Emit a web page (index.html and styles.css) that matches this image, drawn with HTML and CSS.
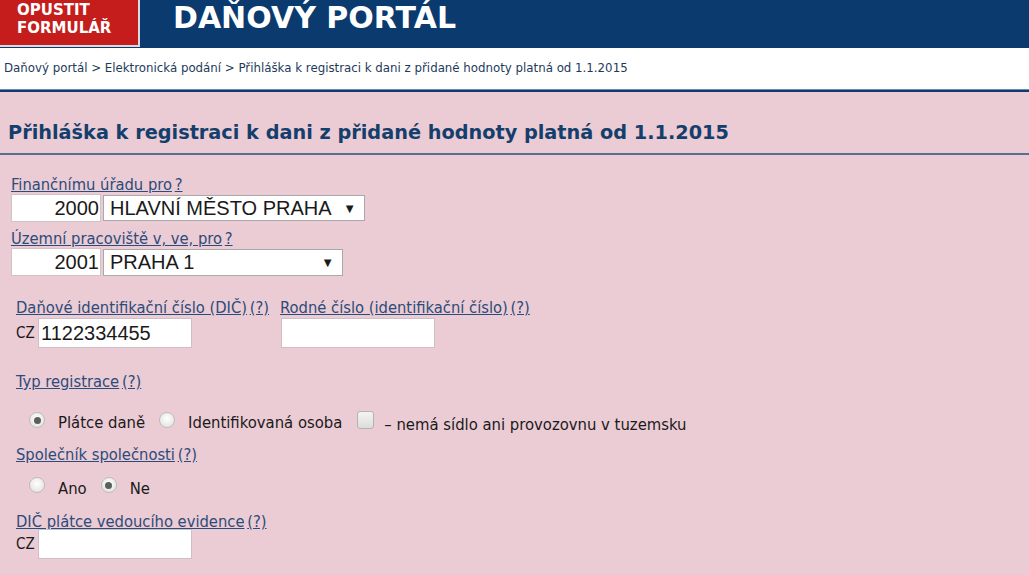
FILE: index.html
```html
<!DOCTYPE html>
<html lang="cs">
<head>
<meta charset="utf-8">
<title>Daňový portál</title>
<link rel="stylesheet" href="styles.css">
</head>
<body>
<header class="top">
  <a class="exit" href="#">OPUSTIT<br>FORMULÁŘ</a>
  <div class="portal">DAŇOVÝ PORTÁL</div>
</header>
<nav class="crumbs">Daňový portál &gt; Elektronická podání &gt; Přihláška k registraci k dani z přidané hodnoty platná od 1.1.2015</nav>
<div class="rule"></div>
<main class="page">
  <h1 class="title">Přihláška k registraci k dani z přidané hodnoty platná od 1.1.2015</h1>

  <section class="office">
    <div class="lbl"><a href="#">Finančnímu úřadu pro</a> <a href="#">?</a></div>
    <div class="pick">
      <div class="code">2000</div>
      <div class="sel sel1"><span>HLAVNÍ MĚSTO PRAHA</span><span class="arr">▼</span></div>
    </div>
    <div class="lbl lbl2"><a href="#">Územní pracoviště v, ve, pro</a> <a href="#">?</a></div>
    <div class="pick">
      <div class="code">2001</div>
      <div class="sel sel2"><span>PRAHA 1</span><span class="arr">▼</span></div>
    </div>
  </section>

  <section class="ids">
    <div class="col">
      <div class="lbl"><a href="#">Daňové identifikační číslo (DIČ)</a> <a href="#">(?)</a></div>
      <div class="cz"><span class="pre">CZ</span><div class="txt">1122334455</div></div>
    </div>
    <div class="col">
      <div class="lbl"><a href="#">Rodné číslo (identifikační číslo)</a> <a href="#">(?)</a></div>
      <div class="cz rc"><div class="txt"></div></div>
    </div>
  </section>

  <section class="block typ">
    <div class="lbl"><a href="#">Typ registrace</a> <a href="#">(?)</a></div>
    <div class="opts">
      <span class="radio on"></span><span class="opt">Plátce daně</span>
      <span class="radio"></span><span class="opt">Identifikovaná osoba</span>
      <span class="check"></span><span class="opt note">– nemá sídlo ani provozovnu v tuzemsku</span>
    </div>
  </section>

  <section class="block spol">
    <div class="lbl"><a href="#">Společník společnosti</a> <a href="#">(?)</a></div>
    <div class="opts">
      <span class="radio"></span><span class="opt">Ano</span>
      <span class="radio on"></span><span class="opt">Ne</span>
    </div>
  </section>

  <section class="block ved">
    <div class="lbl"><a href="#">DIČ plátce vedoucího evidence</a> <a href="#">(?)</a></div>
    <div class="cz"><span class="pre">CZ</span><div class="txt"></div></div>
  </section>
</main>
</body>
</html>
```
FILE: styles.css
```css
* { box-sizing: border-box; }
html, body { margin: 0; padding: 0; }
body {
  background: #ebcbd4;
  font-family: "DejaVu Sans", Verdana, sans-serif;
  color: #1a1a1a;
  height: 575px;
  overflow: hidden;
}
.top {
  display: flex;
  align-items: flex-start;
  height: 48px;
  background: #0a3a6e;
}
.exit {
  display: block;
  flex: none;
  width: 140px;
  height: 47px;
  background: #c41d1b;
  border-right: 2px solid #d9d9e0;
  border-bottom: 2px solid #d9d9e0;
  color: #fff;
  text-decoration: none;
  font-weight: bold;
  font-size: 15px;
  line-height: 18px;
  padding: 1px 0 0 17px;
}
.portal {
  color: #fff;
  font-weight: bold;
  font-size: 30px;
  line-height: 36px;
  margin-left: 33px;
  white-space: nowrap;
}
.crumbs {
  background: #fff;
  height: 41px;
  line-height: 41px;
  font-size: 11.8px;
  color: #1d3a5c;
  padding-left: 4px;
  white-space: nowrap;
}
.rule {
  height: 3px;
  border-top: 1px solid #6d8bb2;
  background: #0d3b6e;
}
.title {
  margin: 0;
  padding: 30px 0 9px 8px;
  font-size: 19.3px;
  line-height: 22px;
  color: #143e6c;
  border-bottom: 2px solid #5a6d92;
  white-space: nowrap;
}
.lbl {
  font-family: "DejaVu Sans Condensed", "DejaVu Sans", sans-serif;
  font-size: 16.4px;
  line-height: 18px;
  white-space: nowrap;
  word-spacing: -2px;
}
.lbl a { color: #2b4b7a; word-spacing: 0; }
.office { padding: 21px 0 0 11px; }
.lbl2 { margin-top: 8px; }
.pick { display: flex; gap: 2px; align-items: center; }
.code {
  width: 90px;
  height: 28px;
  background: #fff;
  border: 1px solid #cfc3c8;
  text-align: right;
  font-family: "Liberation Sans", Arial, sans-serif;
  font-size: 20px;
  line-height: 26px;
  padding-right: 1px;
}
.sel {
  display: flex;
  justify-content: space-between;
  align-items: center;
  height: 26px;
  background: #fff;
  border: 1px solid #a9a9a9;
  font-family: "Liberation Sans", Arial, sans-serif;
  font-size: 20px;
  padding: 0 8px 0 6px;
}
.sel1 { width: 262px; }
.sel2 { width: 240px; height: 27px; }
.arr { font-size: 13px; }
.ids { display: flex; gap: 11px; padding: 23px 0 0 16px; }
.cz { display: flex; align-items: center; margin-top: 1px; }
.rc { padding-left: 1px; }
.pre {
  font-family: "DejaVu Sans Condensed", "DejaVu Sans", sans-serif;
  font-size: 15px;
  width: 22px;
}
.txt {
  width: 154px;
  height: 30px;
  background: #fff;
  border: 1px solid #cdbfc5;
  font-family: "Liberation Sans", Arial, sans-serif;
  font-size: 20px;
  line-height: 28px;
  padding-left: 2px;
}
.block { padding-left: 16px; }
.typ { margin-top: 25px; }
.opts {
  display: flex;
  align-items: flex-start;
  padding-left: 13px;
  font-family: "DejaVu Sans Condensed", "DejaVu Sans", sans-serif;
  font-size: 16.5px;
  line-height: 20px;
  white-space: nowrap;
}
.typ .opts { margin-top: 20px; }
.opt { margin: 2px 14px 0 13px; }
.note { margin: 4px 0 0 10px; }
.radio {
  flex: none;
  width: 16px;
  height: 16px;
  margin-top: 1px;
  border-radius: 50%;
  background: radial-gradient(circle at 50% 40%, #fff 0%, #e2e2e2 85%);
  border: 1px solid #bdbdbd;
  position: relative;
}
.radio.on::after {
  content: "";
  position: absolute;
  left: 3.5px;
  top: 3.5px;
  width: 7px;
  height: 7px;
  border-radius: 50%;
  background: #5e5e5e;
}
.check {
  flex: none;
  width: 17px;
  height: 18px;
  margin-left: 1px;
  border-radius: 3px;
  background: linear-gradient(#f4f4f4, #dcdcdc);
  border: 1px solid #b3b3b3;
}
.spol { margin-top: 11px; }
.spol .opts { margin-top: 12px; }
.spol .opt { margin-top: 3px; }
.ved { margin-top: 14px; }
.ved .cz { margin-top: -2px; }
```
